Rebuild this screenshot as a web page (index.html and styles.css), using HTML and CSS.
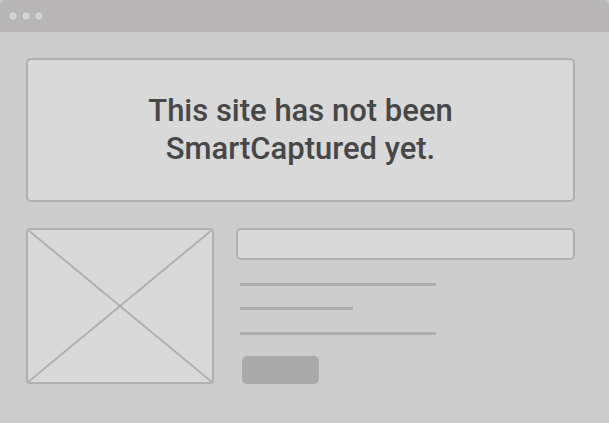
FILE: index.html
```html
<!DOCTYPE html>
<html>
<head>
<meta charset="utf-8">
<link rel="stylesheet" href="styles.css">
</head>
<body>
<div class="window">
  <div class="titlebar">
    <span class="dot"></span><span class="dot"></span><span class="dot"></span>
  </div>
  <div class="content">
    <div class="hero">
      <p class="message">This site has not been<br>SmartCaptured yet.</p>
    </div>
    <div class="row">
      <div class="image">
        <svg class="cross" viewBox="0 0 100 100" preserveAspectRatio="none">
          <line x1="0" y1="0" x2="100" y2="100" vector-effect="non-scaling-stroke"/>
          <line x1="100" y1="0" x2="0" y2="100" vector-effect="non-scaling-stroke"/>
        </svg>
      </div>
      <div class="details">
        <div class="input"></div>
        <div class="lines">
          <div class="line long"></div>
          <div class="line short"></div>
          <div class="line long"></div>
        </div>
        <div class="button"></div>
      </div>
    </div>
  </div>
</div>
</body>
</html>
```

FILE: styles.css
```css
html, body {
  margin: 0;
  padding: 0;
  background: #cdcdcd;
}

.window {
  width: 609px;
  height: 423px;
  background: #cdcdcd;
  font-family: Roboto, "Liberation Sans", sans-serif;
  overflow: hidden;
}

.titlebar {
  height: 32px;
  background: #b8b6b6;
  border-radius: 5px 5px 0 0;
  display: flex;
  align-items: center;
  gap: 3px;
  padding-left: 8px;
  box-sizing: border-box;
}

.dot {
  width: 10px;
  height: 10px;
  border-radius: 50%;
  background: #d2d2d2;
  border: 1px solid #a9a9a9;
  box-sizing: border-box;
}

.content {
  padding: 26px 34px 0 26px;
}

.hero {
  height: 144px;
  box-sizing: border-box;
  background: #d9d9d9;
  border: 2px solid #b0b0b0;
  border-radius: 5px;
  display: flex;
  align-items: center;
  justify-content: center;
}

.message {
  margin: 0 0 1px;
  text-align: center;
  font-size: 31px;
  line-height: 38px;
  font-weight: 500;
  color: #474747;
}

.row {
  display: flex;
  gap: 22px;
  margin-top: 26px;
}

.image {
  width: 188px;
  height: 156px;
  box-sizing: border-box;
  background: #d9d9d9;
  border: 2px solid #b0b0b0;
  border-radius: 4px;
  overflow: hidden;
}

.cross {
  display: block;
  width: 100%;
  height: 100%;
}

.cross line {
  stroke: #b0b0b0;
  stroke-width: 2;
}

.details {
  flex: 1;
  display: flex;
  flex-direction: column;
}

.input {
  height: 32px;
  box-sizing: border-box;
  background: #d9d9d9;
  border: 2px solid #b0b0b0;
  border-radius: 5px;
}

.lines {
  display: flex;
  flex-direction: column;
  gap: 21px;
  padding: 23px 0 0 4px;
}

.line {
  height: 3px;
  background: #adadad;
}

.line.long {
  width: 196px;
}

.line.short {
  width: 113px;
}

.line.short + .line {
  margin-top: 1px;
}

.button {
  margin: 21px 0 0 6px;
  width: 77px;
  height: 28px;
  background: #aaaaaa;
  border-radius: 5px;
}
```
